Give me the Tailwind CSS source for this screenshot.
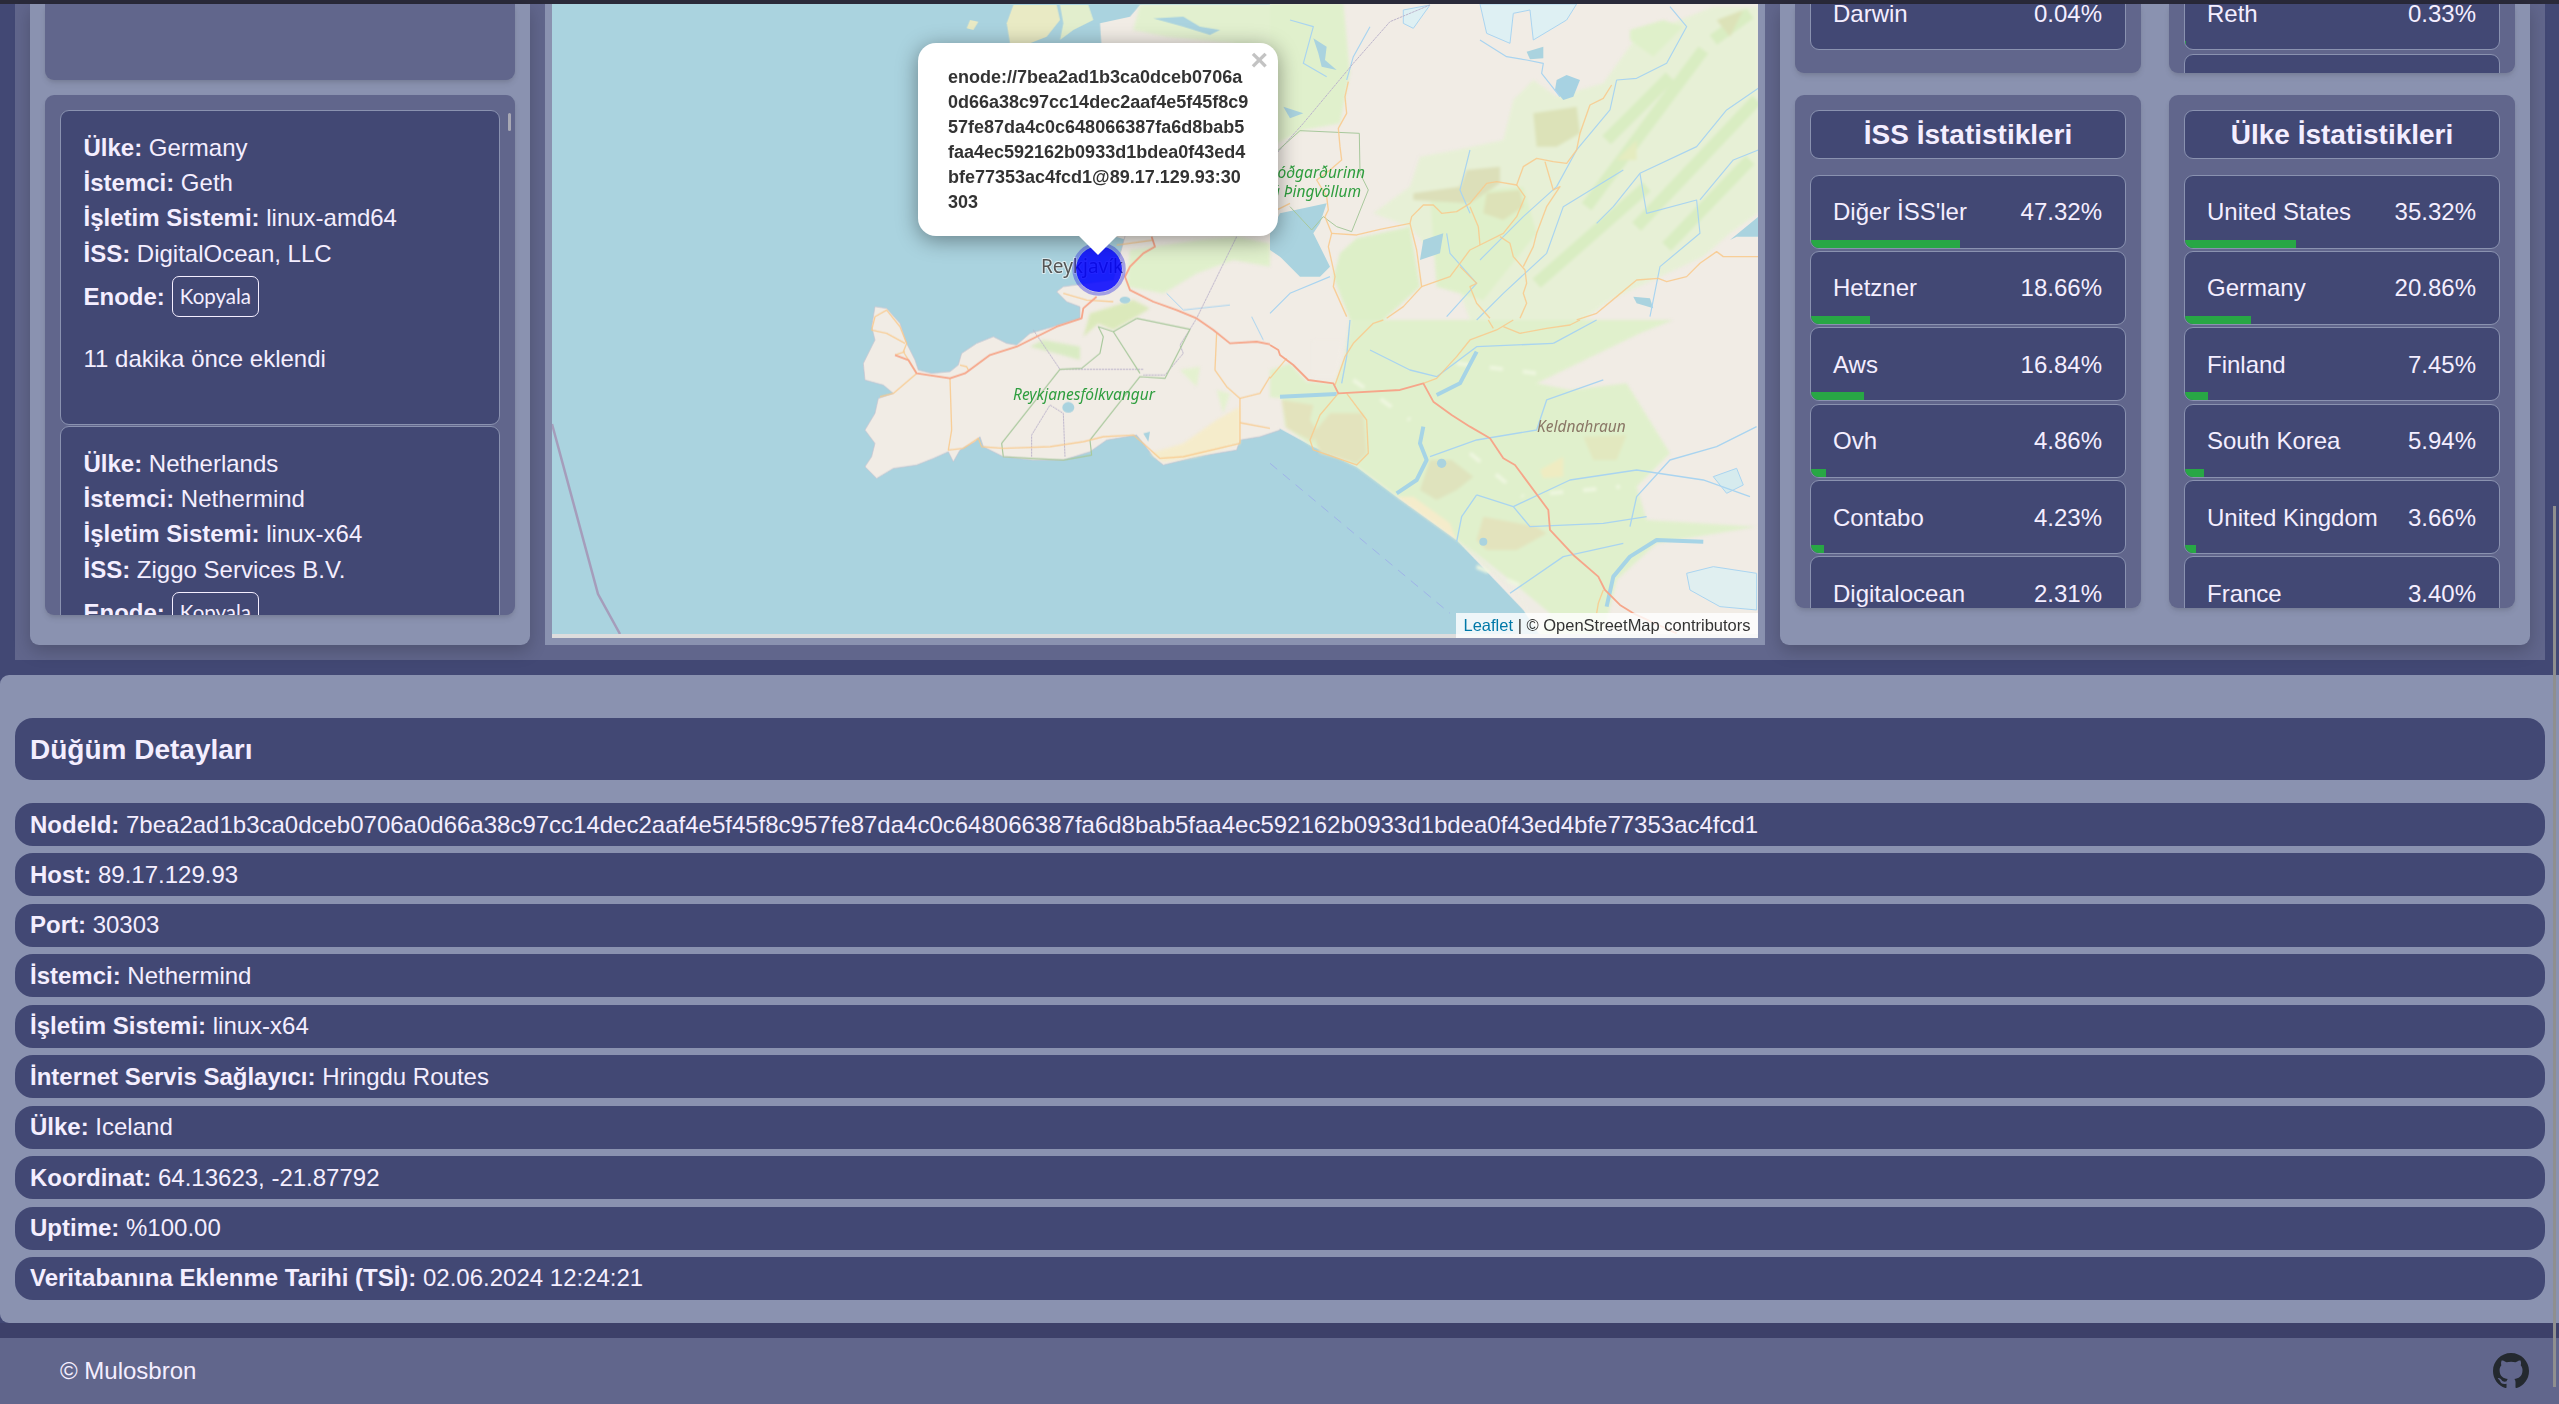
<!DOCTYPE html>
<html lang="tr">
<head>
  <meta charset="UTF-8">
  <meta name="viewport" content="width=device-width, initial-scale=1.0">
  <title>Düğüm Detayları</title>
  <script src="https://cdn.jsdelivr.net/npm/@tailwindcss/browser@4"></script>
</head>
<body class="relative w-[2559px] h-[1404px] overflow-hidden bg-[#424874] text-[#f4eeff] text-[24px] leading-[36px] font-['Liberation_Sans',sans-serif]">
  <div class="h-[4px] bg-[#2a2a3a]"></div>

  <!-- top section -->
  <section class="ml-[15px] mr-[14px] h-[656px] bg-[#61668c] pl-[15px] flex gap-[15px]">
    <!-- node list -->
    <div class="w-[500px] h-[641px] bg-[#8a92b0] rounded-b-[9px] px-[15px] flex flex-col gap-[15px] shadow-[0_6px_18px_rgba(0,0,0,0.2)]">
      <div class="h-[76px] shrink-0 bg-[#61668c] rounded-b-[9px] shadow-md"></div>
      <div class="relative h-[520px] shrink-0 bg-[#61668c] rounded-[9px] px-[15px] pt-[15px] overflow-hidden shadow-md">
        <div class="absolute left-[463px] top-[18px] w-[3px] h-[18px] bg-[#a8a8b4] rounded-full"></div>
        <div class="h-[314.5px] mb-[1.5px] bg-[#424874] border-[1.5px] border-[#8a92b0] rounded-[9px] px-[22.5px] pt-[18.6px] leading-[35.4px]">
          <p><span class="font-bold">Ülke:</span> Germany</p>
          <p><span class="font-bold">İstemci:</span> Geth</p>
          <p><span class="font-bold">İşletim Sistemi:</span> linux-amd64</p>
          <p><span class="font-bold">İSS:</span> DigitalOcean, LLC</p>
          <div class="flex items-center gap-[7px] h-[41px] mt-[4.5px] mb-[24.5px]"><span class="font-bold">Enode:</span><button class="h-[41px] px-[7px] border-[1.5px] border-[#f4eeff] rounded-[7px] text-[20.5px] leading-[36px] font-['Lato',sans-serif]">Kopyala</button></div>
          <p>11 dakika önce eklendi</p>
        </div>
        <div class="bg-[#424874] border-[1.5px] border-[#8a92b0] rounded-[9px] px-[22.5px] pt-[18.6px] h-[314.5px] leading-[35.4px]">
          <p><span class="font-bold">Ülke:</span> Netherlands</p>
          <p><span class="font-bold">İstemci:</span> Nethermind</p>
          <p><span class="font-bold">İşletim Sistemi:</span> linux-x64</p>
          <p><span class="font-bold">İSS:</span> Ziggo Services B.V.</p>
          <div class="flex items-center gap-[7px] h-[41px] mt-[4.5px]"><span class="font-bold">Enode:</span><button class="h-[41px] px-[7px] border-[1.5px] border-[#f4eeff] rounded-[7px] text-[20.5px] leading-[36px] font-['Lato',sans-serif]">Kopyala</button></div>
        </div>
      </div>
    </div>

    <!-- map -->
    <div class="w-[1220px] h-[641px] bg-[#8a92b0] pl-[7px] pr-[7px] pb-[7px] shrink-0">
      <div class="relative w-[1206px] h-[634px] bg-[#dddddd] overflow-hidden">
        <svg class="block w-[1206px] h-[630px]" viewBox="552 4 1206 630" xmlns="http://www.w3.org/2000/svg">
          <rect x="552" y="4" width="1206" height="630" fill="#aad3df"/>
          <path d="M552 424L598 594L620 634" fill="none" stroke="#a59dbb" stroke-width="2.5"/>

          <!-- land fills -->
          <g class="blur-[0.6px]" fill="#f1ece5" stroke-linejoin="round">
            <g transform="translate(900 0) scale(.3333)">
              <path d="M600 70L690 50L720 15L1200 15L1200 810L700 810L680 720L640 708Z"/>
              <path d="M340 15L470 15L480 60L440 110L390 130L330 130L320 70Z" fill="#e9eac4"/>
              <path d="M480 15L565 15L580 60L520 90L480 120L490 70Z" fill="#e2eecd"/>
              <path d="M210 60L235 65L220 90L200 85Z" fill="#e9eac4"/>
            </g>
            <path transform="translate(850 230) scale(.3333)" d="M640 170L620 185L650 215L690 230L690 265L610 290L540 310L500 345L470 340L430 320L380 340L335 370L325 405L300 425L245 430L205 420L195 390L170 340L150 280L110 235L75 230L65 290L75 330L40 400L45 450L100 465L130 490L85 505L75 550L45 600L75 640L65 680L45 710L80 745L130 715L200 705L250 685L295 665L310 695L330 660L375 635L390 620L400 650L460 680L550 690L640 690L720 665L770 630L860 615L880 640L910 680L940 705L1040 680L1160 660L1170 630L1230 620L1290 600L1290 0L830 0L790 150Z" stroke="#c9c3cf" stroke-width="2"/>
            <path transform="translate(1270 320) scale(.3333)" d="M0 310L120 375L260 440L380 530L560 660L760 870L810 945L1470 945L1470 -970L0 -970Z"/>
          </g>

          <!-- vegetation -->
          <g class="blur-[1.5px]">
            <g transform="translate(900 0) scale(.3333)">
              <path d="M720 15L1200 15L1200 300L1000 130L800 110L700 90Z" fill="#e2f0cf"/>
            </g>
            <g transform="translate(850 230) scale(.3333)">
              <path d="M840 60L1050 30L1160 20L1260 40L1260 110L1150 90L1040 130L940 190L830 170Z" fill="#e0f0cc"/>
              <path d="M720 250L850 210L900 235L850 265L790 300L745 280L700 320Z" fill="#dbe9bb"/>
              <path d="M540 350L580 330L690 350L690 390L620 370Z" fill="#d9ebc3"/>
              <path d="M990 420L1050 410L1040 470Z" fill="#e4f1d0"/>
              <path d="M1100 480L1140 490L1120 550Z" fill="#e4f1d0"/>
              <path d="M1000 640L1100 570L1170 530L1170 640L1040 680L940 695L900 670Z" fill="#f5eccb"/>
            </g>
            <g transform="translate(1270 320) scale(.3333)">
              <path d="M240 0L225 110L195 190L110 185L60 130L0 150L0 232L35 235L45 320L120 375L260 440L380 530L560 660L740 820L810 945L1000 945L1040 780L1160 670L1460 620L1130 600L1100 500L1200 400L1070 190L900 210L800 190L1110 40L1210 0Z" fill="#e0f0cc"/>
              <path d="M580 670L740 820L810 945L840 880L720 780Z" fill="#efece4"/>
              <path d="M130 60L220 60L200 170L130 170Z" fill="#f1ece5"/>
              <path d="M35 240L130 255L120 300L140 330L130 365L50 325Z" fill="#e3e3bd"/>
              <path d="M130 340L180 280L280 280L290 400L260 430L150 400Z" fill="#e3e3bd"/>
              <path d="M480 420L545 420L610 470L560 510L500 540L450 510Z" fill="#dfe3bd"/>
              <path d="M640 590L800 620L830 640L740 690L650 690L620 660Z" fill="#e3e3bd"/>
              <path d="M940 350L1070 345L1040 420L970 420Z" fill="#e2e8bf"/>
              <path d="M810 450L880 410L880 470L820 475Z" fill="#efecc2"/>
              <path d="M380 530L560 660L540 610L430 530Z" fill="#f5eccb"/>
              <g fill="none" stroke="#eef6df" stroke-width="12" stroke-dasharray="40 60">
                <path d="M250 180L420 300"/>
                <path d="M560 130L800 160"/>
                <path d="M600 400L760 530"/>
                <path d="M840 520L1050 500"/>
                <path d="M620 740L760 800"/>
              </g>
            </g>
            <g transform="translate(1270 0) scale(.3333)">
              <path d="M0 10L220 10L240 220L210 370L100 390L0 440Z" fill="#e0f0cc"/>
              <path d="M1330 20L1465 20L1465 640L1380 700L1300 770L1170 830L1020 900L940 960L600 960L560 850L420 680L310 640L420 560L450 470L560 450L700 420L730 300L790 240L860 290L1000 250L1100 110L1230 60Z" fill="#e7f0d6"/>
              <path d="M210 760L260 715L420 680L450 860L340 960L240 960L190 830Z" fill="#ddefc8"/>
              <path d="M480 580L760 560L800 700L640 900L500 860Z" fill="#dff0ca"/>
              <path d="M1080 90L1180 60L1240 80L1150 170L1080 120Z" fill="#dff0ca"/>
              <g fill="none" stroke="#d9edc2" stroke-width="36">
                <path d="M950 620L1300 150"/>
                <path d="M1100 680L1460 300"/>
                <path d="M1010 420L1200 230"/>
                <path d="M800 850L1130 560"/>
                <path d="M1190 740L1440 480"/>
                <path d="M1330 120L1440 40"/>
              </g>
              <path d="M790 340L920 320L930 400L860 440L800 440Z" fill="#dce2b8"/>
              <path d="M590 510L690 500L690 550L600 610L430 600L430 580L570 560Z" fill="#dcdfb9"/>
              <path d="M650 580L750 570L760 620L700 660L640 640Z" fill="#dde2b8"/>
              <path d="M1340 60L1420 30L1380 110Z" fill="#dce2b8"/>
              <path d="M1040 480L1100 420L1100 480Z" fill="#e5ecc0"/>
            </g>
          </g>

          <!-- water, boundaries, roads, labels -->
          <g class="blur-[0.5px]" fill="none" stroke-linejoin="round">
            <g transform="translate(900 0) scale(.3333)">
              <path d="M760 55L850 50L900 80L960 90L930 105L850 80Z" fill="#aad3df"/>
            </g>
            <g transform="translate(850 230) scale(.3333)">
              <path d="M880 610L900 605L895 635Z" fill="#aad3df"/>
              <ellipse cx="655" cy="532" rx="18" ry="16" fill="#aad3df"/>
              <ellipse cx="825" cy="210" rx="16" ry="10" fill="#aad3df"/>
              <g stroke="#a9d4f0" stroke-width="3">
                <path d="M950 190L1000 240L1140 225"/>
                <path d="M1205 260L1240 330"/>
              </g>
              <g stroke="#bcb4cb" stroke-width="3" stroke-dasharray="7 2">
                <path d="M1160 20L1040 265L1020 298L990 345L1000 370L945 435L880 435"/>
                <path d="M880 418L630 418L550 300"/>
                <path d="M545 680L545 615L600 525L640 550L645 680"/>
              </g>
              <g stroke="#a8c89c" stroke-width="3.5">
                <path d="M860 265L1020 298L945 445L870 440L720 630L725 675L640 690L540 685L460 680L455 640L630 418L695 415L750 370L760 320L745 290L790 305L870 430"/>
                <path d="M790 305L860 265"/>
              </g>
              <g stroke="#f9c98b" stroke-width="4" stroke-opacity=".85">
                <path d="M200 430L130 490L90 500"/>
                <path d="M135 375L165 365M165 340L110 310L65 300L75 260L110 240L150 290L170 340L160 365L200 430"/>
                <path d="M300 445L305 600L295 660L340 655L385 625L395 650L460 655L600 650L700 635L760 620L850 615L880 640L930 685L1000 680L1170 640L1170 505L1130 470L1095 420L1100 310"/>
                <path d="M1170 505L1230 490L1260 440"/>
                <path d="M1170 578L1260 595"/>
                <path d="M330 405L350 410L355 420"/>
                <path d="M640 190L710 210L790 215"/>
                <path d="M910 30L800 45"/>
              </g>
              <g stroke="#f6a68a" stroke-width="5.5">
                <path d="M1260 343L1220 335L1140 340L1090 300L1040 265L980 240L910 215L840 180L825 140L840 110L880 70L915 50L905 20"/>
                <path d="M740 200L700 235L695 265L620 290L500 350L420 375L345 430L300 445L200 430L175 390L135 375"/>
              </g>
            </g>
            <g transform="translate(1270 320) scale(.3333)">
              <path d="M1250 760L1330 740L1460 760L1460 870L1350 860L1260 810Z" fill="#e0eff0" stroke="#a9d4f0" stroke-width="3"/>
              <path d="M1330 470L1400 445L1420 495L1370 520Z" fill="#d6ebee" stroke="#a9d4f0" stroke-width="3"/>
              <circle cx="515" cy="430" r="14" fill="#aad3df"/>
              <circle cx="640" cy="665" r="12" fill="#aad3df"/>
              <g stroke="#a6d4e6" stroke-width="12">
                <path d="M1300 665L1160 660L1080 710L1030 770L1010 860"/>
                <path d="M30 230L200 222"/>
                <path d="M620 95L570 190L500 225"/>
                <path d="M460 320L450 370L470 420L440 480L380 520"/>
              </g>
              <g stroke="#a9d4f0" stroke-width="4">
                <path d="M620 525L575 590L560 665"/>
                <path d="M620 525L730 560L780 620L1000 610L1130 590"/>
                <path d="M480 410L620 360L800 330L830 240L1000 180"/>
                <path d="M730 560L900 480L1100 450L1300 480L1440 530"/>
                <path d="M1080 620L1100 530L1200 420L1340 380L1460 320"/>
                <path d="M720 820L880 710L1060 670"/>
                <path d="M240 0L230 110L215 190"/>
                <path d="M300 90L420 150L500 170L620 80L850 70"/>
                <path d="M850 70L980 0"/>
              </g>
              <path d="M0 430L540 880" stroke="#9fb3e8" stroke-width="3" stroke-dasharray="28 22"/>
              <g stroke="#f9c98b" stroke-width="4" stroke-opacity=".85">
                <path d="M0 175L50 115"/>
                <path d="M195 195L225 110L250 70L310 10L340 0"/>
                <path d="M460 190L500 175L560 110L600 60L680 30L730 0"/>
                <path d="M700 20L750 40L830 25L900 15L930 0"/>
                <path d="M205 220L150 285L120 360L130 390L260 435L295 400L290 300L230 220"/>
                <path d="M1000 810L985 850L980 880"/>
                <path d="M655 0L670 25"/>
              </g>
              <path d="M0 75L25 90L30 105L70 135L115 180L190 190L205 220L390 210L460 190L490 245L545 285L600 320L660 355L700 415L735 435L835 570L840 630L910 705L985 770L1005 810L1050 855L1090 880L1220 940" stroke="#f6a68a" stroke-width="5.5"/>
            </g>
            <g transform="translate(1270 0) scale(.3333)">
              <path d="M630 12L920 12L890 60L790 120L780 30L730 40L720 130L650 100Z" fill="#def0f3" stroke="#a9d4f0" stroke-width="3"/>
              <path d="M400 30L480 15L430 85L400 70Z" fill="#def0f3" stroke="#a9d4f0" stroke-width="3"/>
              <path d="M30 640L170 610L150 670L130 700L180 800L150 830L90 830L30 770L0 750L0 700Z" fill="#aad3df"/>
              <path d="M450 780L460 720L520 700L510 760Z" fill="#aad3df"/>
              <path d="M860 240L890 225L930 240L910 290L880 300L855 270Z" fill="#a7d2e2"/>
              <path d="M770 155L820 140L820 175L780 178Z" fill="#aad3df"/>
              <path d="M130 115L170 140L165 180L200 210L155 200L145 160Z" fill="#aad3df"/>
              <path d="M40 320L100 340L60 355Z" fill="#aad3df"/>
              <path d="M1380 720L1465 650L1465 710L1400 710Z" fill="#aad3df"/>
              <path d="M1090 890L1140 895L1150 925L1100 910Z" fill="#aad3df"/>
              <g stroke="#a9d4f0" stroke-width="3.5">
                <path d="M630 120L710 170L770 180L820 190L815 220L870 290"/>
                <path d="M1040 240L1100 235L1190 190L1250 80L1200 20"/>
                <path d="M1040 240L1020 330L920 450L860 560L760 650L630 780"/>
                <path d="M1465 265L1370 330L1280 440L1110 520L1130 640L1280 600L1290 700L1170 800L1140 950"/>
                <path d="M1060 510L880 620L830 760L700 880L620 960"/>
                <path d="M1465 450L1390 480L1290 600"/>
                <path d="M600 450L570 570L600 640"/>
                <path d="M980 670L1030 620L1110 520"/>
                <path d="M0 940L60 880L180 830"/>
                <path d="M530 700L540 760L620 850L530 950"/>
                <path d="M300 80L250 170L230 240"/>
                <path d="M60 60L130 80L100 190L170 230"/>
              </g>
              <path d="M480 15L360 65L250 190L100 370L20 460" stroke="#bcb4cb" stroke-width="3" stroke-dasharray="8 2"/>
              <path d="M20 455L90 392L268 400L270 520L295 570L245 695L200 680L160 650L125 690L60 620" stroke="#a8c89c" stroke-width="3"/>
              <g stroke="#f9c98b" stroke-width="4" stroke-opacity=".85">
                <path d="M235 245L225 290L230 340L205 385L210 440L215 480L180 510L140 540L170 590L175 630L165 650L185 700L175 740L195 830L190 860L230 950"/>
                <path d="M185 700L260 705L330 688L420 670L425 650L460 615L490 615L515 640L560 635L600 610L650 550L680 545L740 555L760 500L800 475L850 485L890 490L920 450L930 400L960 315L1000 295L1025 255"/>
                <path d="M740 555L765 590L740 650L700 700L630 735L600 750L570 790L540 830L455 860L440 750L420 670"/>
                <path d="M455 860L400 920L350 955"/>
                <path d="M600 620L625 680L630 735"/>
                <path d="M825 485L850 570L870 560L830 620L800 700L790 740L760 800"/>
                <path d="M690 710L720 730L730 770L765 810L770 850L760 880L770 910L750 955"/>
                <path d="M570 800L620 850L600 860L620 910L660 955"/>
                <path d="M920 960L980 940L1040 890L1100 840L1165 835L1190 845L1250 830L1290 790L1340 755L1360 770L1465 770"/>
                <path d="M0 640L60 610"/>
              </g>
            </g>

            <text x="1365" y="178" text-anchor="end" font-family="Noto Sans" font-style="italic" font-size="15.5" fill="#2f9e3f">Þjóðgarðurinn</text>
            <text x="1361" y="197" text-anchor="end" font-family="Noto Sans" font-style="italic" font-size="15.5" fill="#2f9e3f">á Þingvöllum</text>
            <text x="1013" y="400" font-family="Noto Sans" font-style="italic" font-size="15.5" fill="#2f9e3f">Reykjanesfólkvangur</text>
            <text x="1537" y="432" font-family="Noto Sans" font-style="italic" font-size="15.5" fill="#8a7766">Keldnahraun</text>
            <text x="1041" y="273" font-family="Noto Sans" font-size="19" fill="#555555" stroke="#ffffff" stroke-opacity=".6" stroke-width="2" paint-order="stroke">Reykjavík</text>
          </g>
          <circle cx="1099" cy="269" r="25" fill="none" stroke="#2a2ae0" stroke-opacity=".4" stroke-width="3.5"/>
          <circle cx="1099" cy="269" r="23" fill="#0000ff" fill-opacity=".85"/>
        </svg>

        <!-- popup, coordinates are relative to the map -->
        <div class="absolute left-[366px] top-[39px] w-[360px] h-[193px] bg-white rounded-[18px] shadow-[0_4px_21px_rgba(0,0,0,0.4)] pl-[30px] pt-[22px] text-[18px] leading-[25px] font-bold text-[#333333]">
          <p>enode://7bea2ad1b3ca0dceb0706a<br>0d66a38c97cc14dec2aaf4e5f45f8c9<br>57fe87da4c0c648066387fa6d8bab5<br>faa4ec592162b0933d1bdea0f43ed4<br>bfe77353ac4fcd1@89.17.129.93:30<br>303</p>
          <span class="absolute right-[10px] top-[2px] text-[30px] leading-[30px] text-[#c3c3c3] font-bold">×</span>
        </div>
        <div class="absolute left-[527px] top-[232px] w-0 h-0 border-l-[19px] border-r-[19px] border-t-[19px] border-l-transparent border-r-transparent border-t-white"></div>

        <div class="absolute right-0 bottom-0 h-[25px] w-[302px] bg-white/80 pl-[7.5px] text-[16.5px] leading-[25px] text-[#333333] whitespace-nowrap"><span class="text-[#0078a8]">Leaflet</span> | © OpenStreetMap contributors</div>
      </div>
    </div>

    <!-- statistics -->
    <div class="w-[750px] h-[641px] bg-[#8a92b0] rounded-b-[9px] px-[15px] shadow-[0_6px_18px_rgba(0,0,0,0.2)] grid grid-cols-[346px_346px] gap-x-[28px] gap-y-[22px] grid-rows-[69px_513px]">
      <div class="bg-[#61668c] rounded-b-[9px] px-[15px] overflow-hidden shadow-md">
        <div class="h-[74px] -mt-[28px] bg-[#424874] border-[1.5px] border-[#8a92b0] rounded-[9px] overflow-hidden flex flex-col">
          <div class="flex justify-between pl-[22px] pr-[23px] pt-[18.5px]"><span>Darwin</span><span>0.04%</span></div>
        </div>
      </div>
      <div class="bg-[#61668c] rounded-b-[9px] px-[15px] overflow-hidden shadow-md">
        <div class="h-[74px] -mt-[28px] mb-[3.5px] bg-[#424874] border-[1.5px] border-[#8a92b0] rounded-[9px] overflow-hidden flex flex-col">
          <div class="flex justify-between pl-[22px] pr-[23px] pt-[18.5px]"><span>Reth</span><span>0.33%</span></div>
          <div class="mt-auto h-[8px] bg-[#28a745]" style="width:0.33%"></div>
        </div>
        <div class="h-[74px] bg-[#424874] border-[1.5px] border-[#8a92b0] rounded-[9px]"></div>
      </div>

      <div class="bg-[#61668c] rounded-[9px] px-[15px] pt-[15px] overflow-hidden shadow-md">
        <h3 class="h-[48.5px] mb-[16px] pt-[1px] bg-[#424874] border-[1.5px] border-[#8a92b0] rounded-[9px] flex items-center justify-center text-[28px] font-bold">İSS İstatistikleri</h3>
        <div class="grid gap-[2.4px]">
          <div class="h-[74px] bg-[#424874] border-[1.5px] border-[#8a92b0] rounded-[9px] overflow-hidden flex flex-col"><div class="flex justify-between pl-[22px] pr-[23px] pt-[18.5px]"><span>Diğer İSS'ler</span><span>47.32%</span></div><div class="mt-auto h-[8px] bg-[#28a745]" style="width:47.32%"></div></div>
          <div class="h-[74px] bg-[#424874] border-[1.5px] border-[#8a92b0] rounded-[9px] overflow-hidden flex flex-col"><div class="flex justify-between pl-[22px] pr-[23px] pt-[18.5px]"><span>Hetzner</span><span>18.66%</span></div><div class="mt-auto h-[8px] bg-[#28a745]" style="width:18.66%"></div></div>
          <div class="h-[74px] bg-[#424874] border-[1.5px] border-[#8a92b0] rounded-[9px] overflow-hidden flex flex-col"><div class="flex justify-between pl-[22px] pr-[23px] pt-[18.5px]"><span>Aws</span><span>16.84%</span></div><div class="mt-auto h-[8px] bg-[#28a745]" style="width:16.84%"></div></div>
          <div class="h-[74px] bg-[#424874] border-[1.5px] border-[#8a92b0] rounded-[9px] overflow-hidden flex flex-col"><div class="flex justify-between pl-[22px] pr-[23px] pt-[18.5px]"><span>Ovh</span><span>4.86%</span></div><div class="mt-auto h-[8px] bg-[#28a745]" style="width:4.86%"></div></div>
          <div class="h-[74px] bg-[#424874] border-[1.5px] border-[#8a92b0] rounded-[9px] overflow-hidden flex flex-col"><div class="flex justify-between pl-[22px] pr-[23px] pt-[18.5px]"><span>Contabo</span><span>4.23%</span></div><div class="mt-auto h-[8px] bg-[#28a745]" style="width:4.23%"></div></div>
          <div class="h-[74px] bg-[#424874] border-[1.5px] border-[#8a92b0] rounded-[9px] overflow-hidden flex flex-col"><div class="flex justify-between pl-[22px] pr-[23px] pt-[18.5px]"><span>Digitalocean</span><span>2.31%</span></div></div>
        </div>
      </div>
      <div class="bg-[#61668c] rounded-[9px] px-[15px] pt-[15px] overflow-hidden shadow-md">
        <h3 class="h-[48.5px] mb-[16px] pt-[1px] bg-[#424874] border-[1.5px] border-[#8a92b0] rounded-[9px] flex items-center justify-center text-[28px] font-bold">Ülke İstatistikleri</h3>
        <div class="grid gap-[2.4px]">
          <div class="h-[74px] bg-[#424874] border-[1.5px] border-[#8a92b0] rounded-[9px] overflow-hidden flex flex-col"><div class="flex justify-between pl-[22px] pr-[23px] pt-[18.5px]"><span>United States</span><span>35.32%</span></div><div class="mt-auto h-[8px] bg-[#28a745]" style="width:35.32%"></div></div>
          <div class="h-[74px] bg-[#424874] border-[1.5px] border-[#8a92b0] rounded-[9px] overflow-hidden flex flex-col"><div class="flex justify-between pl-[22px] pr-[23px] pt-[18.5px]"><span>Germany</span><span>20.86%</span></div><div class="mt-auto h-[8px] bg-[#28a745]" style="width:20.86%"></div></div>
          <div class="h-[74px] bg-[#424874] border-[1.5px] border-[#8a92b0] rounded-[9px] overflow-hidden flex flex-col"><div class="flex justify-between pl-[22px] pr-[23px] pt-[18.5px]"><span>Finland</span><span>7.45%</span></div><div class="mt-auto h-[8px] bg-[#28a745]" style="width:7.45%"></div></div>
          <div class="h-[74px] bg-[#424874] border-[1.5px] border-[#8a92b0] rounded-[9px] overflow-hidden flex flex-col"><div class="flex justify-between pl-[22px] pr-[23px] pt-[18.5px]"><span>South Korea</span><span>5.94%</span></div><div class="mt-auto h-[8px] bg-[#28a745]" style="width:5.94%"></div></div>
          <div class="h-[74px] bg-[#424874] border-[1.5px] border-[#8a92b0] rounded-[9px] overflow-hidden flex flex-col"><div class="flex justify-between pl-[22px] pr-[23px] pt-[18.5px]"><span>United Kingdom</span><span>3.66%</span></div><div class="mt-auto h-[8px] bg-[#28a745]" style="width:3.66%"></div></div>
          <div class="h-[74px] bg-[#424874] border-[1.5px] border-[#8a92b0] rounded-[9px] overflow-hidden flex flex-col"><div class="flex justify-between pl-[22px] pr-[23px] pt-[18.5px]"><span>France</span><span>3.40%</span></div></div>
        </div>
      </div>
    </div>
  </section>

  <!-- node details -->
  <section class="mt-[15px] h-[648px] bg-[#8a92b0] rounded-l-[9px] pl-[15px] pr-[14px] pt-[43px]">
    <h2 class="h-[62px] mb-[23px] pt-[1px] bg-[#424874] rounded-[18px] flex items-center px-[15px] text-[28px] font-bold">Düğüm Detayları</h2>
    <div class="grid gap-[7.44px]">
      <div class="h-[43px] bg-[#424874] rounded-[18px] flex items-center px-[15px] whitespace-pre"><span class="font-bold">NodeId:</span> 7bea2ad1b3ca0dceb0706a0d66a38c97cc14dec2aaf4e5f45f8c957fe87da4c0c648066387fa6d8bab5faa4ec592162b0933d1bdea0f43ed4bfe77353ac4fcd1</div>
      <div class="h-[43px] bg-[#424874] rounded-[18px] flex items-center px-[15px] whitespace-pre"><span class="font-bold">Host:</span> 89.17.129.93</div>
      <div class="h-[43px] bg-[#424874] rounded-[18px] flex items-center px-[15px] whitespace-pre"><span class="font-bold">Port:</span> 30303</div>
      <div class="h-[43px] bg-[#424874] rounded-[18px] flex items-center px-[15px] whitespace-pre"><span class="font-bold">İstemci:</span> Nethermind</div>
      <div class="h-[43px] bg-[#424874] rounded-[18px] flex items-center px-[15px] whitespace-pre"><span class="font-bold">İşletim Sistemi:</span> linux-x64</div>
      <div class="h-[43px] bg-[#424874] rounded-[18px] flex items-center px-[15px] whitespace-pre"><span class="font-bold">İnternet Servis Sağlayıcı:</span> Hringdu Routes</div>
      <div class="h-[43px] bg-[#424874] rounded-[18px] flex items-center px-[15px] whitespace-pre"><span class="font-bold">Ülke:</span> Iceland</div>
      <div class="h-[43px] bg-[#424874] rounded-[18px] flex items-center px-[15px] whitespace-pre"><span class="font-bold">Koordinat:</span> 64.13623, -21.87792</div>
      <div class="h-[43px] bg-[#424874] rounded-[18px] flex items-center px-[15px] whitespace-pre"><span class="font-bold">Uptime:</span> %100.00</div>
      <div class="h-[43px] bg-[#424874] rounded-[18px] flex items-center px-[15px] whitespace-pre"><span class="font-bold">Veritabanına Eklenme Tarihi (TSİ):</span> 02.06.2024 12:24:21</div>
    </div>
  </section>

  <div class="h-[15px] bg-[#3d4069]"></div>

  <footer class="h-[66px] bg-[#61668c] flex items-center justify-between pl-[60px] pr-[30px]">
    <span>© Mulosbron</span>
    <svg class="w-[36px] h-[36px]" viewBox="0 0 16 16" fill="#24292f" xmlns="http://www.w3.org/2000/svg"><path d="M8 0C3.58 0 0 3.58 0 8c0 3.54 2.29 6.53 5.47 7.59.4.07.55-.17.55-.38 0-.19-.01-.82-.01-1.49-2.01.37-2.53-.49-2.69-.94-.09-.23-.48-.94-.82-1.13-.28-.15-.68-.52-.01-.53.63-.01 1.08.58 1.23.82.72 1.21 1.87.87 2.33.66.07-.52.28-.87.51-1.07-1.78-.2-3.64-.89-3.64-3.95 0-.87.31-1.59.82-2.15-.08-.2-.36-1.02.08-2.12 0 0 .67-.21 2.2.82.64-.18 1.32-.27 2-.27.68 0 1.36.09 2 .27 1.53-1.04 2.2-.82 2.2-.82.44 1.1.16 1.92.08 2.12.51.56.82 1.27.82 2.15 0 3.07-1.87 3.75-3.65 3.95.29.25.54.73.54 1.48 0 1.07-.01 1.93-.01 2.2 0 .21.15.46.55.38A8.013 8.013 0 0016 8c0-4.42-3.58-8-8-8z"/></svg>
  </footer>

  <!-- page scrollbar thumb -->
  <div class="absolute left-[2553px] top-[506px] w-[3px] h-[881px] bg-[#8f8f8f]"></div>
</body>
</html>
